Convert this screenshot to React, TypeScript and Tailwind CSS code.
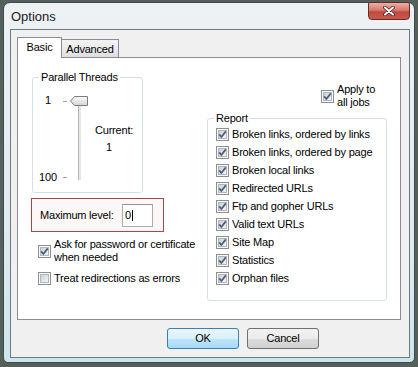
import React from 'react';

function CheckBox({ checked = true }: { checked?: boolean }) {
    return (
        <svg width="13" height="13" viewBox="0 0 13 13" className="shrink-0">
            <defs>
                <linearGradient id="cbfill" x1="0" y1="0" x2="1" y2="1">
                    <stop offset="0" stopColor="#c9cdd3" />
                    <stop offset="1" stopColor="#f6f7f8" />
                </linearGradient>
            </defs>
            <rect x="0.5" y="0.5" width="12" height="12" fill="#f9f9f9" stroke="#8e8f8f" />
            <rect x="2.5" y="2.5" width="8" height="8" fill="url(#cbfill)" stroke="#b3b7bc" />
            {checked && <path d="M3.2 6.4 L5.4 9 L9.8 3.4" fill="none" stroke="#4b5b7c" strokeWidth="1.7" />}
        </svg>
    );
}

function CheckRow({ label, checked = true }: { label: string; checked?: boolean }) {
    return (
        <div className="flex h-[18px] items-center gap-[3px] whitespace-nowrap">
            <CheckBox checked={checked} />
            <span>{label}</span>
        </div>
    );
}

const reportItems = [
    'Broken links, ordered by links',
    'Broken links, ordered by page',
    'Broken local links',
    'Redirected URLs',
    'Ftp and gopher URLs',
    'Valid text URLs',
    'Site Map',
    'Statistics',
    'Orphan files',
];

export default function App() {
    return (
        <div className="w-[418px] h-[367px] overflow-hidden bg-[#56605a] pt-[2px] pl-[3px] font-['Liberation_Sans',Arial,sans-serif] text-[11px] leading-[13px] tracking-[-0.2px] text-black">
            <div className="w-[412px] rounded-t-[7px] rounded-b-[5px] border border-[#3e4a55] bg-[radial-gradient(ellipse_90px_14px_at_52%_38%,#d3d6d9_0%,transparent_100%),linear-gradient(180deg,#eef2f5_0%,#e4ebf0_55%,#cde6ec_100%)] pb-[4px] pl-[6px]">
                {/* title bar */}
                <div className="flex h-[26px] items-start">
                    <div className="pl-[1px] pt-[6px] text-[13px] leading-[15px] tracking-normal text-[#1b1b1b]">Options</div>
                    <div className="ml-auto mr-[4px] -mt-[1px] flex h-[18px] w-[42px] items-center justify-center rounded-b-[4px] rounded-t-[2px] border border-[#6b2b24] bg-[linear-gradient(180deg,#eab0a6_0%,#d7786c_45%,#c24a3e_55%,#c7594c_100%)]">
                        <svg width="14" height="10" viewBox="0 0 14 10">
                            <path d="M3 1.5 L11 8.5 M11 1.5 L3 8.5" stroke="#4a1f1a" strokeWidth="3.6" strokeLinecap="round" />
                            <path d="M3 1.5 L11 8.5 M11 1.5 L3 8.5" stroke="#ffffff" strokeWidth="2" strokeLinecap="round" />
                        </svg>
                    </div>
                </div>

                {/* client area */}
                <div className="w-[400px] border border-[#6d7a86] bg-[#f0f0f0] pl-[6px] pt-[7px] pb-[8px]">
                    {/* tabs */}
                    <div className="flex h-[20px] items-end">
                        <div className="relative z-10 -mb-px flex h-[21px] w-[45px] justify-center border border-b-0 border-[#898c95] bg-white pt-[3px]">
                            Basic
                        </div>
                        <div className="flex h-[18px] w-[57px] justify-center border border-b-0 border-l-0 border-[#898c95] bg-[linear-gradient(180deg,#f3f3f3_0%,#ebebeb_50%,#dedede_100%)] pt-[3px]">
                            Advanced
                        </div>
                    </div>

                    {/* tab panel */}
                    <div className="flex h-[263px] w-[384px] border border-[#898c95] bg-white pl-[13px] pt-[13px]">
                        {/* left column */}
                        <div className="flex w-[133px] flex-col">
                            <fieldset className="ml-[1px] h-[122px] w-[111px] rounded-[3px] border border-[#d5dfe5]">
                                <legend className="ml-[6px] px-[2px]">Parallel Threads</legend>
                                <div className="mt-[10px] flex pl-[6px]">
                                    <div className="flex h-[90px] w-[18px] flex-col items-center justify-between">
                                        <span>1</span>
                                        <span>100</span>
                                    </div>
                                    <svg width="30" height="90" viewBox="0 0 30 90" className="ml-[2px]">
                                        <defs>
                                            <linearGradient id="thumb" x1="0" y1="0" x2="0" y2="1">
                                                <stop offset="0" stopColor="#fbfbfb" />
                                                <stop offset="1" stopColor="#d4d4d4" />
                                            </linearGradient>
                                        </defs>
                                        <line x1="4" y1="7.5" x2="8" y2="7.5" stroke="#a0a0a0" />
                                        <line x1="4" y1="83.5" x2="8" y2="83.5" stroke="#a0a0a0" />
                                        <rect x="19" y="11" width="3" height="75" fill="#e7e7e7" />
                                        <line x1="19.5" y1="11" x2="19.5" y2="86" stroke="#b5b5b5" />
                                        <path d="M11.5 7 L15.5 2.5 L28.5 2.5 L28.5 11.5 L15.5 11.5 Z" fill="url(#thumb)" stroke="#7c7c7c" />
                                    </svg>
                                    <div className="ml-[6px] mt-[30px] flex flex-col">
                                        <span>Current:</span>
                                        <span className="mt-[4px] pl-[11px]">1</span>
                                    </div>
                                </div>
                            </fieldset>

                            <div className="mt-[5px] flex h-[34px] w-[133px] items-center border border-[#a8474a] bg-[#fdf8f8] pl-[8px]">
                                <span className="w-[82px]">Maximum level:</span>
                                <div className="flex h-[23px] w-[31px] items-center border border-[#abadb3] border-t-[#8f959c] bg-white pl-[2px]">
                                    <span>0</span>
                                    <span className="ml-px h-[11px] w-px bg-black" />
                                </div>
                            </div>

                            <div className="mt-[6px] ml-[7px] flex w-[170px] items-center gap-[3px] whitespace-nowrap">
                                <CheckBox />
                                <span>
                                    Ask for password or certificate
                                    <br />
                                    when needed
                                </span>
                            </div>

                            <div className="mt-[8px] ml-[7px] flex w-[170px] items-center gap-[3px] whitespace-nowrap">
                                <CheckBox checked={false} />
                                <span>Treat redirections as errors</span>
                            </div>
                        </div>

                        {/* right column */}
                        <div className="ml-[43px] flex flex-col">
                            <div className="mt-[12px] flex items-center gap-[3px] pl-[114px]">
                                <CheckBox />
                                <span className="w-[45px]">Apply to all jobs</span>
                            </div>
                            <fieldset className="mt-[3px] h-[189px] w-[180px] rounded-[3px] border border-[#d5dfe5] pl-[8px]">
                                <legend className="ml-[-2px] px-[2px]">Report</legend>
                                <div className="flex flex-col">
                                    {reportItems.map((item) => (
                                        <CheckRow key={item} label={item} />
                                    ))}
                                </div>
                            </fieldset>
                        </div>
                    </div>

                    {/* buttons */}
                    <div className="mt-[8px] flex gap-[8px] pl-[150px]">
                        <button className="flex h-[21px] w-[72px] items-center justify-center rounded-[3px] border border-[#3c7fb1] bg-[linear-gradient(180deg,#eaf6fd_0%,#d9f0fc_50%,#bee6fd_51%,#a7d9f5_100%)]">
                            OK
                        </button>
                        <button className="flex h-[21px] w-[72px] items-center justify-center rounded-[3px] border border-[#707070] bg-[linear-gradient(180deg,#f2f2f2_0%,#ebebeb_50%,#dddddd_51%,#cfcfcf_100%)]">
                            Cancel
                        </button>
                    </div>
                </div>
            </div>
        </div>
    );
}
